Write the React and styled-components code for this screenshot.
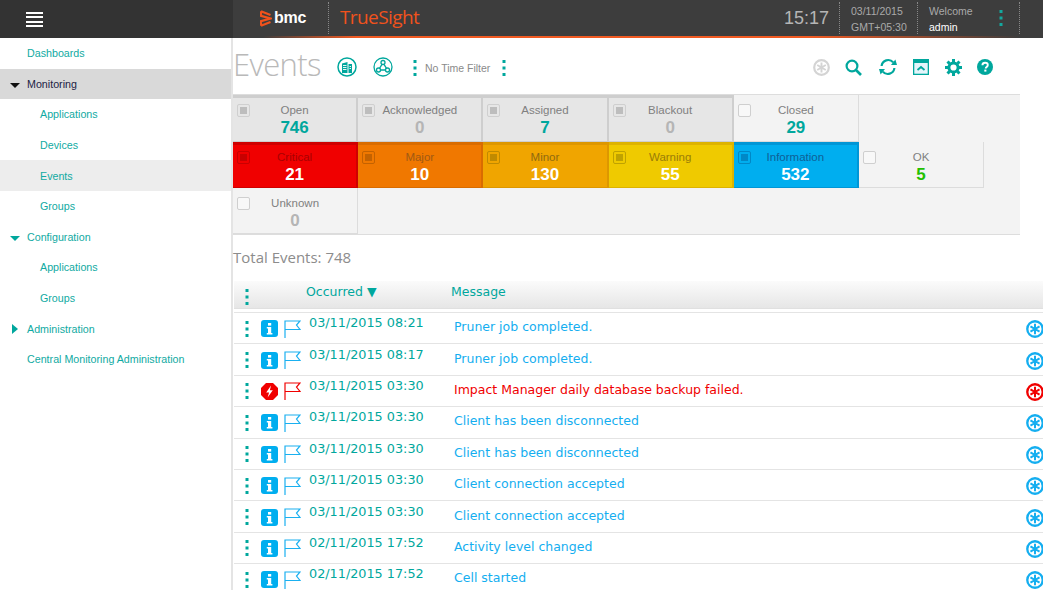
import React from 'react';
import styled, { createGlobalStyle } from 'styled-components';

const teal = '#00a79d';
const sans = '"Liberation Sans", Arial, sans-serif';
const wide = '"DejaVu Sans", Verdana, sans-serif';
const light = '"Open Sans", "Noto Sans", sans-serif';

const GlobalStyle = createGlobalStyle`
	html, body {
		margin: 0;
		height: 100%;
		overflow: hidden;
		background: #fff;
		font-family: ${sans};
	}
	* { box-sizing: border-box; }
`;

const Page = styled.div`
	width: 1043px;
	height: 590px;
	overflow: hidden;
	display: flex;
	flex-direction: column;
`;

/* top bar */
const TopBar = styled.header`
	height: 38px;
	flex: none;
	display: flex;
	background: #3d3d3d;
`;
const MenuCell = styled.div`
	width: 233px;
	background: #333;
	display: flex;
	align-items: center;
	padding-left: 26px;
`;
const Burger = styled.div`
	width: 17px;
	height: 15px;
	background: repeating-linear-gradient(#fff 0 2px, transparent 2px 4.3px);
`;
const BrandStrip = styled.div`
	flex: 1;
	display: flex;
	align-items: center;
	height: 38px;
	padding-bottom: 2px;
	position: relative;
	&::after {
		content: '';
		position: absolute;
		left: 30px;
		right: 0;
		bottom: 0;
		height: 2px;
		background: linear-gradient(90deg, #3d3d3d, #f15a22 12%, #f15a22 70%, #3d3d3d 97%);
	}
`;
const BmcLogo = styled.div`
	margin-left: 27px;
	width: 68px;
	display: flex;
	align-items: center;
	gap: 2px;
	color: #fff;
	font: bold 16px ${sans};
	letter-spacing: -0.3px;
`;
const ProductName = styled.div`
	height: 32px;
	border-left: 1px dotted #888;
	padding-left: 11px;
	color: #f1521c;
	font: 400 19px/31px ${light};
	letter-spacing: -0.6px;
`;
const Clock = styled.div`
	margin-left: auto;
	padding-right: 10px;
	color: #b5b5b5;
	font: 18px/36px ${sans};
`;
const InfoBlock = styled.div`
	height: 32px;
	width: ${p => p.$width}px;
	padding-left: 11px;
	padding-top: 2px;
	border-left: 1px dotted #888;
	color: #aaa;
	font: 10.5px/15.5px ${sans};
	white-space: nowrap;
`;
const UserName = styled.div`
	color: #fff;
`;
const UserMenu = styled.div`
	height: 32px;
	width: 37px;
	border-right: 1px dotted #888;
	display: flex;
	align-items: center;
	justify-content: center;
`;
const HeaderEnd = styled.div`
	width: 23px;
`;

/* layout */
const Body = styled.div`
	flex: 1;
	display: flex;
	min-height: 0;
`;
const Sidebar = styled.nav`
	width: 233px;
	flex: none;
	background: #fff;
	border-right: 2px solid #e4e4e4;
	font: 10.7px ${sans};
`;
const NavRow = styled.div`
	height: 30.6px;
	display: flex;
	align-items: center;
	padding-left: ${p => (p.$sub ? 40 : 27)}px;
	color: ${p => (p.$active ? '#222244' : '#10aaa2')};
	background: ${p => (p.$active ? '#d9d9d9' : p.$current ? '#ededed' : 'transparent')};
	position: relative;
`;
const Caret = styled.span`
	position: absolute;
	left: ${p => (p.$right ? 12 : 10)}px;
	top: ${p => (p.$right ? 11 : 14)}px;
	border-style: solid;
	border-color: transparent;
	${p => p.$right
		? `border-width: 5px 0 5px 6px; border-left-color: ${p.color};`
		: `border-width: 5px 5px 0 5px; border-top-color: ${p.color};`}
`;
const Main = styled.main`
	flex: 1;
	min-width: 0;
`;

/* toolbar */
const Toolbar = styled.div`
	height: 56px;
	display: flex;
	align-items: center;
	padding-right: 50px;
`;
const Title = styled.h1`
	margin: 0 15px 5px 0;
	width: 89px;
	color: #b9b9b9;
	font: 300 31px/44px ${light};
	letter-spacing: -0.6px;
`;
const ViewIcons = styled.div`
	display: flex;
	align-items: center;
	gap: 16px;
	margin-top: 2px;
`;
const TimeFilter = styled.div`
	display: flex;
	align-items: center;
	margin-left: 20px;
	margin-top: 4px;
	color: #8a8a8a;
	font: 10.5px ${sans};
	gap: 8px;
`;
const FilterEnd = styled.span`
	margin-left: 4px;
	display: flex;
`;
const Actions = styled.div`
	margin-left: auto;
	display: flex;
	align-items: center;
	gap: 15.4px;
	margin-top: 2px;
`;

/* status tiles */
const TilePanel = styled.section`
	width: 787px;
	height: 141px;
	background: #f3f3f3;
	border-top: 1px solid #ddd;
	border-bottom: 1px solid #ddd;
	display: grid;
	grid-template-columns: repeat(6, 125.2px);
	grid-template-rows: 47px 46px 46px;
`;
const tileColors = {
	critical: { bg: '#f00000', edge: '#cf0000', label: '#a80000', box: '#c80000' },
	major: { bg: '#f07800', edge: '#d96c00', label: '#a05a14', box: '#c46200' },
	minor: { bg: '#f0a500', edge: '#dd9700', label: '#8f6a10', box: '#c08a00' },
	warning: { bg: '#efca00', edge: '#ddb300', label: '#9a7d08', box: '#bfa200' },
	info: { bg: '#00aeef', edge: '#0096d6', label: '#0f5f96', box: '#0088c6' },
};
const Tile = styled.div`
	position: relative;
	text-align: center;
	padding-top: ${p => (p.$on ? 5 : 8)}px;
	font: 11.5px/14px ${sans};
	color: ${p => (p.$tone ? tileColors[p.$tone].label : '#808080')};
	background: ${p => (p.$tone ? tileColors[p.$tone].bg : p.$on ? '#e6e6e6' : '#f3f3f3')};
	border-style: solid;
	border-color: ${p => (p.$tone ? tileColors[p.$tone].edge : p.$on ? '#cecece' : '#dcdcdc')};
	border-width: ${p => (p.$on ? '3px 2px 1px 0' : '0 1px 1px 0')};
`;
const Check = styled.span`
	position: absolute;
	left: 4px;
	top: ${p => (p.$on ? 6 : 9)}px;
	width: 13px;
	height: 13px;
	border: 1px solid ${p => (p.$tone ? tileColors[p.$tone].box : '#cfcfcf')};
	border-radius: 2px;
	background: ${p => (p.$on ? 'transparent' : '#f8f8f8')};
	display: flex;
	align-items: center;
	justify-content: center;
	&::before {
		content: '';
		display: ${p => (p.$on ? 'block' : 'none')};
		width: 7px;
		height: 7px;
		background: ${p => (p.$tone ? tileColors[p.$tone].box : '#bdbdbd')};
	}
`;
const TileValue = styled.div`
	font: bold 17px/19px ${sans};
	margin-top: 1px;
	color: ${p => p.color};
`;
const TotalLine = styled.div`
	height: 46px;
	padding-top: 10px;
	color: #8c8c8c;
	font: 15px/24px ${light};
`;

/* event table */
const TableHead = styled.div`
	height: 28px;
	margin-left: 1px;
	display: flex;
	align-items: center;
	background: linear-gradient(#fbfbfb, #e6e6e6);
	border-bottom: 1px solid #e0e0e0;
	color: ${teal};
	font: 12.5px ${wide};
`;
const HeadMenu = styled.div`
	width: 26px;
	display: flex;
	justify-content: center;
	margin-top: 5px;
`;
const HeadOccurred = styled.div`
	width: 191px;
	padding-left: 46px;
	margin-top: -6px;
	white-space: nowrap;
`;
const SortMark = styled.span`
	font-size: 12.5px;
`;
const HeadMessage = styled.div`
	margin-top: -6px;
`;
const Rows = styled.div`
	margin-top: 3px;
	margin-left: 1px;
	border-top: 1px solid #e4e4e4;
`;
const Row = styled.div`
	height: 31.4px;
	display: flex;
	align-items: center;
	border-bottom: 1px solid #e4e4e4;
	white-space: nowrap;
`;
const RowMenu = styled.div`
	width: 26px;
	margin-right: 1px;
	display: flex;
	justify-content: center;
	padding-top: 1px;
`;
const RowIcons = styled.div`
	width: 48px;
	display: flex;
	align-items: center;
	gap: 6px;
	padding-top: 1px;
`;
const Occurred = styled.div`
	width: 145px;
	color: ${teal};
	margin-top: -11px;
	font: 12.8px ${wide};
`;
const Message = styled.div`
	flex: 1;
	color: ${p => p.color};
	margin-top: -3px;
	font: 12.5px ${wide};
`;
const RowEnd = styled.div`
	width: 17px;
	height: 17px;
	margin-top: 1px;
	flex: none;
`;

const Kebab = ({ color = teal }) => (
	<svg width="4" height="16" viewBox="0 0 4 16" fill={color}>
		<rect x="0.5" y="0" width="3" height="3" />
		<rect x="0.5" y="6.5" width="3" height="3" />
		<rect x="0.5" y="13" width="3" height="3" />
	</svg>
);

const Star = ({ color, size = 18 }) => (
	<svg width={size} height={size} viewBox="0 0 17 17" fill="none" stroke={color}>
		<circle cx="8.5" cy="8.5" r="7.3" strokeWidth="2.2" />
		<path d="M8.5 3.6v9.8M4.2 6l8.6 5M12.8 6l-8.6 5" strokeWidth="1.9" />
	</svg>
);

const InfoBadge = () => (
	<svg width="17" height="17" viewBox="0 0 17 17">
		<rect width="17" height="17" rx="3" fill="#00aeef" />
		<rect x="7" y="3" width="3.2" height="2.6" fill="#fff" />
		<path d="M5.8 7h4.4v6h1.2v1.6H5.8V13H7V8.6H5.8z" fill="#fff" />
	</svg>
);

const AlertBadge = () => (
	<svg width="17" height="17" viewBox="0 0 17 17">
		<path d="M5 0h7l5 5v7l-5 5H5l-5-5V5z" fill="#f00000" />
		<path d="M10 2.6 5.2 9.4h2.9L6.6 14.4l5.2-7.2H8.9z" fill="#fff" />
	</svg>
);

const Flag = ({ color }) => (
	<svg width="17" height="18" viewBox="0 0 17 18" fill="none" stroke={color} strokeWidth="1.2">
		<path d="M1 18V1h15l-3.5 4 3.5 4.5H1" />
	</svg>
);

const BmcMark = () => (
	<svg width="12" height="17" viewBox="0 0 12 17" fill="none" stroke="#f1521c" strokeWidth="2.2">
		<path d="M1 1.2v4.6L10.5 8.5 1 11.2v4.6" />
		<path d="M1 1.2 10.5 5M1 15.8 10.5 12" />
	</svg>
);

const ServerIcon = () => (
	<svg width="20" height="20" viewBox="0 0 20 20">
		<circle cx="10" cy="10" r="9" fill="none" stroke={teal} strokeWidth="1.5" />
		<path d="M5 6.5 10.5 5v11H5zM11.5 7H15v9h-3.5z" fill={teal} />
		<path d="M6 8.5h3.5M6 10.5h3.5M6 12.5h3.5M12.5 9.5h1.5M12.5 11.5h1.5" stroke="#fff" strokeWidth="0.9" />
	</svg>
);

const ServiceIcon = () => (
	<svg width="20" height="20" viewBox="0 0 20 20" fill="none" stroke={teal} strokeWidth="1.3">
		<circle cx="10" cy="10" r="9" />
		<circle cx="10" cy="5.5" r="2" />
		<circle cx="5.5" cy="13" r="2" />
		<circle cx="14.5" cy="13" r="2" />
		<path d="m9 7.3-2.5 4M11 7.3l2.5 4M7.5 13h5" />
	</svg>
);

const SearchIcon = () => (
	<svg width="17" height="17" viewBox="0 0 17 17" fill="none" stroke={teal} strokeWidth="2.2">
		<circle cx="7" cy="7" r="5.4" />
		<path d="m11 11 5 5" strokeWidth="2.6" />
	</svg>
);

const RefreshIcon = () => (
	<svg width="20" height="18" viewBox="0 0 20 18" fill="none" stroke={teal} strokeWidth="2.2">
		<path d="M3.6 8a6.6 6.6 0 0 1 11.6-3.6" />
		<path d="M16.4 10a6.6 6.6 0 0 1-11.6 3.6" />
		<path d="M13 7h6l-1.6-5.5zM7 11H1l1.6 5.5z" fill={teal} stroke="none" />
	</svg>
);

const PanelIcon = () => (
	<svg width="16" height="16" viewBox="0 0 16 16">
		<rect width="16" height="16" fill={teal} />
		<rect x="1.3" y="4" width="13.4" height="10.7" fill="#e4f5fb" />
		<path d="m4.5 11 3.5-3 3.5 3" fill="none" stroke={teal} strokeWidth="1.8" />
	</svg>
);

const GearIcon = () => (
	<svg width="17" height="17" viewBox="0 0 17 17" fill="none" stroke={teal}>
		<circle cx="8.5" cy="8.5" r="4.6" strokeWidth="3" />
		<path d="M8.5 0v3M8.5 14v3M0 8.5h3M14 8.5h3M2.5 2.5l2.1 2.1M12.4 12.4l2.1 2.1M14.5 2.5l-2.1 2.1M4.6 12.4l-2.1 2.1" strokeWidth="3" />
	</svg>
);

const HelpIcon = () => (
	<svg width="16" height="16" viewBox="0 0 16 16">
		<circle cx="8" cy="8" r="8" fill={teal} />
		<path d="M5.4 6.2C5.5 4.6 6.6 3.8 8.1 3.8c1.6 0 2.7.9 2.7 2.2 0 1.9-2.1 1.9-2.1 3.4" fill="none" stroke="#fff" strokeWidth="1.9" />
		<rect x="7.3" y="10.6" width="2.1" height="2" fill="#fff" />
	</svg>
);

const navItems = [
	{ label: 'Dashboards' },
	{ label: 'Monitoring', active: true, caret: 'down', caretColor: '#111' },
	{ label: 'Applications', sub: true },
	{ label: 'Devices', sub: true },
	{ label: 'Events', sub: true, current: true },
	{ label: 'Groups', sub: true },
	{ label: 'Configuration', caret: 'down', caretColor: teal },
	{ label: 'Applications', sub: true },
	{ label: 'Groups', sub: true },
	{ label: 'Administration', caret: 'right', caretColor: teal },
	{ label: 'Central Monitoring Administration' },
];

const tiles = [
	{ label: 'Open', value: 746, color: teal, on: true },
	{ label: 'Acknowledged', value: 0, color: '#b5b5b5', on: true },
	{ label: 'Assigned', value: 7, color: teal, on: true },
	{ label: 'Blackout', value: 0, color: '#b5b5b5', on: true },
	{ label: 'Closed', value: 29, color: teal },
	null,
	{ label: 'Critical', value: 21, color: '#fff', on: true, tone: 'critical' },
	{ label: 'Major', value: 10, color: '#fff', on: true, tone: 'major' },
	{ label: 'Minor', value: 130, color: '#fff', on: true, tone: 'minor' },
	{ label: 'Warning', value: 55, color: '#fff', on: true, tone: 'warning' },
	{ label: 'Information', value: 532, color: '#fff', on: true, tone: 'info' },
	{ label: 'OK', value: 5, color: '#22c000' },
	{ label: 'Unknown', value: 0, color: '#b5b5b5' },
];

const events = [
	['03/11/2015 08:21', 'Pruner job completed.'],
	['03/11/2015 08:17', 'Pruner job completed.'],
	['03/11/2015 03:30', 'Impact Manager daily database backup failed.', true],
	['03/11/2015 03:30', 'Client has been disconnected'],
	['03/11/2015 03:30', 'Client has been disconnected'],
	['03/11/2015 03:30', 'Client connection accepted'],
	['03/11/2015 03:30', 'Client connection accepted'],
	['02/11/2015 17:52', 'Activity level changed'],
	['02/11/2015 17:52', 'Cell started'],
];

export default function App() {
	return (
		<Page>
			<GlobalStyle />
			<TopBar>
				<MenuCell><Burger /></MenuCell>
				<BrandStrip>
					<BmcLogo><BmcMark />bmc</BmcLogo>
					<ProductName>TrueSight</ProductName>
					<Clock>15:17</Clock>
					<InfoBlock $width={78}>03/11/2015<br />GMT+05:30</InfoBlock>
					<InfoBlock $width={66}>Welcome<UserName>admin</UserName></InfoBlock>
					<UserMenu><Kebab color="#14a89e" /></UserMenu>
					<HeaderEnd />
				</BrandStrip>
			</TopBar>
			<Body>
				<Sidebar>
					{navItems.map((item, i) => (
						<NavRow key={i} $sub={item.sub} $active={item.active} $current={item.current}>
							{item.caret && <Caret $right={item.caret === 'right'} color={item.caretColor} />}
							{item.label}
						</NavRow>
					))}
				</Sidebar>
				<Main>
					<Toolbar>
						<Title>Events</Title>
						<ViewIcons><ServerIcon /><ServiceIcon /></ViewIcons>
						<TimeFilter><Kebab />No Time Filter<FilterEnd><Kebab /></FilterEnd></TimeFilter>
						<Actions>
							<Star color="#d4d4d4" size={17} />
							<SearchIcon />
							<RefreshIcon />
							<PanelIcon />
							<GearIcon />
							<HelpIcon />
						</Actions>
					</Toolbar>
					<TilePanel>
						{tiles.map((tile, i) => tile ? (
							<Tile key={i} $on={tile.on} $tone={tile.tone}>
								<Check $on={tile.on} $tone={tile.tone} />
								{tile.label}
								<TileValue color={tile.color}>{tile.value}</TileValue>
							</Tile>
						) : <div key={i} />)}
					</TilePanel>
					<TotalLine>Total Events: 748</TotalLine>
					<TableHead>
						<HeadMenu><Kebab /></HeadMenu>
						<HeadOccurred>Occurred<SortMark> ▼</SortMark></HeadOccurred>
						<HeadMessage>Message</HeadMessage>
					</TableHead>
					<Rows>
						{events.map(([time, text, failed], i) => (
							<Row key={i}>
								<RowMenu><Kebab /></RowMenu>
								<RowIcons>
									{failed ? <AlertBadge /> : <InfoBadge />}
									<Flag color={failed ? '#f00000' : '#1ab0f0'} />
								</RowIcons>
								<Occurred>{time}</Occurred>
								<Message color={failed ? '#f00000' : '#14aef0'}>{text}</Message>
								<RowEnd><Star color={failed ? '#f00000' : '#14aef0'} /></RowEnd>
							</Row>
						))}
					</Rows>
				</Main>
			</Body>
		</Page>
	);
}
